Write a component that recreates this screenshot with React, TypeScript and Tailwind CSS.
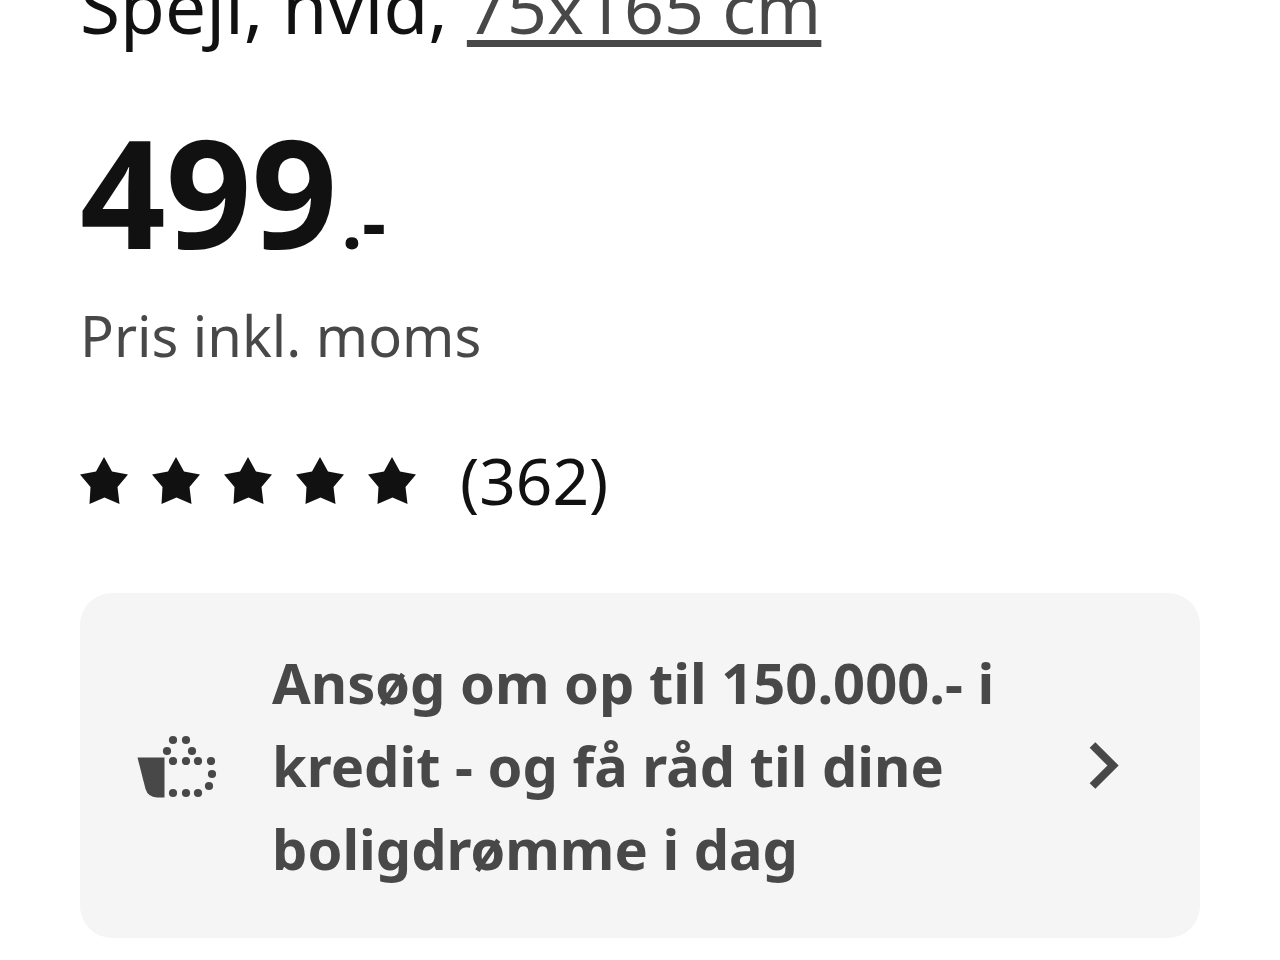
import { clsx } from "clsx";

const RATING = 5;

// dotted half of the basket, one entry per dot
const BASKET_DOTS = [
  [173, 740],
  [186, 740],
  [167, 751],
  [192, 751],
  [173, 761],
  [186, 761],
  [198, 761],
  [211, 761],
  [212, 774],
  [209, 786],
  [173, 793],
  [186, 793],
  [198, 793],
];

function Star({ className }: { className?: string }) {
  return (
    <svg viewBox="0 0 48 48" className={clsx("size-12", className)} fill="currentColor" aria-hidden="true">
      <path d="M24 0l8 14.500 16 3-10.500 12.500 2 17-15-6.500-15 6.500 1-17L0 17.500l16-3z" />
    </svg>
  );
}

function BasketIcon() {
  return (
    <svg viewBox="128 718 96 96" className="size-24 shrink-0" fill="currentColor" aria-hidden="true">
      <path d="M137.500 757.500H164.500V797.500H157Q148 797 145.500 789z" />
      {BASKET_DOTS.map(([cx, cy]) => (
        <circle key={`${cx}-${cy}`} cx={cx} cy={cy} r="4.100" />
      ))}
    </svg>
  );
}

function Chevron() {
  return (
    <svg viewBox="0 0 96 96" className="size-24 shrink-0" fill="none" stroke="currentColor" strokeWidth="8" aria-hidden="true">
      <path d="M36.500 27l20.500 20.500-20.500 20.500" />
    </svg>
  );
}

export default function App() {
  return (
    <main className="overflow-hidden bg-white px-20 pb-5 font-['Noto_Sans',sans-serif] text-[#111]">
      <h1 className="-mt-[42px] text-[73px] leading-24 font-normal">
        Spejl, hvid,{" "}
        <a href="#size" className="text-[70px] text-[#484848] underline decoration-[7px] underline-offset-[6px]">
          75x165 cm
        </a>
      </h1>

      <p className="mt-16 text-[150px] leading-36 font-bold">
        499<span className="ml-1 text-[74px]">.-</span>
      </p>
      <p className="text-[56px] leading-21 text-[#484848]">Pris inkl. moms</p>

      <button type="button" className="mt-14 flex items-center" aria-label="362 anmeldelser">
        <span className="flex gap-6">
          {Array.from({ length: RATING }, (_, i) => (
            <Star key={i} />
          ))}
        </span>
        <span className="ml-11 text-[64px] leading-24">(362)</span>
      </button>

      <button
        type="button"
        className="mt-16 flex w-full items-center rounded-[32px] bg-[#f5f5f5] p-12 text-left text-[#484848]"
      >
        <BasketIcon />
        <span className="ml-12 flex-1 pr-12 text-[56px] leading-[83px] font-bold">
          Ansøg om op til 150.000.- i kredit - og få råd til dine boligdrømme i dag
        </span>
        <Chevron />
      </button>
    </main>
  );
}
